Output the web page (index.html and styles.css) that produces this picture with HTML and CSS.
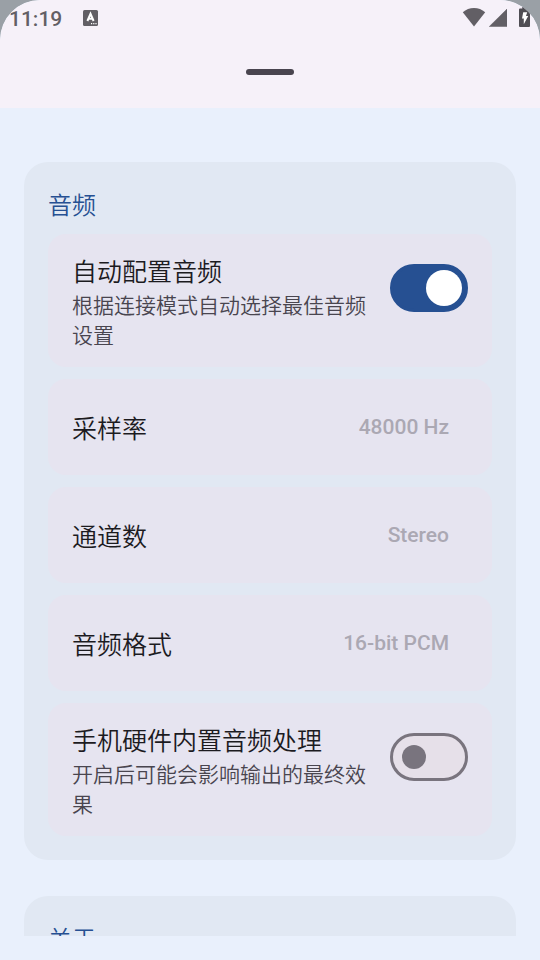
FILE: index.html
```html
<!DOCTYPE html>
<html lang="zh-CN">
  <head>
    <meta charset="UTF-8" />
    <meta name="viewport" content="width=device-width, initial-scale=1.0" />
    <title>音频</title>
    <link rel="stylesheet" href="styles.css">
  </head>
  <body>
    <header class="sheet-top">
      <div class="status-bar">
        <span class="time">11:19</span>
        <svg class="ime" width="16" height="18" viewBox="0 0 16 18">
          <rect x="0" y="1" width="15" height="16" rx="1.5" fill="#625f65" />
          <path d="M4.400 12L7.500 4.800L10.600 12M5.600 9.800H9.400" fill="none" stroke="#fff" stroke-width="2" />
          <path d="M8 14h1.200v1.200H8zM10.200 14h1.200v1.200h-1.200zM12.400 14h1.200v1.200h-1.200z" fill="#fff" />
        </svg>
        <div class="status-icons">
          <svg width="24" height="20" viewBox="0 0 24 20">
            <path d="M12 19.500L0.800 5.200C4 2.500 7.800 1 12 1s8 1.500 11.200 4.200z" fill="#625f65" />
          </svg>
          <svg width="18" height="20" viewBox="0 0 18 20">
            <path d="M18 2v17.500H0.300z" fill="#625f65" stroke="#625f65" stroke-width="0.500" stroke-linejoin="round" />
          </svg>
          <svg class="battery" width="12" height="20" viewBox="0 0 12 20">
            <path d="M3.300 0h4.600v1.600H10a1 1 0 0 1 1 1V19a1 1 0 0 1-1 1H1a1 1 0 0 1-1-1V2.600a1 1 0 0 1 1-1h2.300z" fill="#4f4d53" />
            <path d="M4.200 5.200h4L7 9h2.200L4.800 17.200V11.500H3z" fill="#fff" />
          </svg>
        </div>
      </div>
      <div class="handle"></div>
    </header>

    <main class="content">
      <section class="card">
        <h2>音频</h2>

        <label class="item switch-item">
          <span class="item-text">
            <span class="item-title">自动配置音频</span>
            <span class="item-desc">根据连接模式自动选择最佳音频设置</span>
          </span>
          <input type="checkbox" class="switch" checked />
        </label>

        <div class="item">
          <span class="item-title">采样率</span>
          <button type="button" class="value" disabled>48000 Hz</button>
        </div>

        <div class="item">
          <span class="item-title">通道数</span>
          <button type="button" class="value" disabled>Stereo</button>
        </div>

        <div class="item">
          <span class="item-title">音频格式</span>
          <button type="button" class="value" disabled>16-bit PCM</button>
        </div>

        <label class="item switch-item">
          <span class="item-text">
            <span class="item-title">手机硬件内置音频处理</span>
            <span class="item-desc">开启后可能会影响输出的最终效果</span>
          </span>
          <input type="checkbox" class="switch" />
        </label>
      </section>

      <section class="card">
        <h2>关于</h2>
      </section>
    </main>
  </body>
</html>
```
FILE: styles.css
```css
* {
  box-sizing: border-box;
}

html {
  background: #9aa0a6;
}

body {
  margin: 0;
  height: 100vh;
  display: flex;
  flex-direction: column;
  padding-bottom: 24px;
  background: #e9f0fc;
  border-radius: 40px 40px 0 0;
  font-family: "Noto Sans CJK SC", Roboto, sans-serif;
  font-weight: 350;
  color: #1c1b1f;
}

/* Top of the sheet */
.sheet-top {
  flex: none;
  height: 108px;
  background: #f6f1f9;
  border-radius: 40px 40px 0 0;
}

.status-bar {
  display: flex;
  align-items: center;
  height: 36px;
  padding: 0 9px;
}

.time {
  padding-top: 2px;
  font: 500 21px/30px Roboto, sans-serif;
  color: #625f65;
}

.ime {
  margin-left: 21px;
}

.status-icons {
  display: flex;
  gap: 3px;
  margin-left: auto;
  padding-bottom: 2px;
}

.battery {
  margin-left: 9px;
}

.handle {
  width: 48px;
  height: 6px;
  margin: 33px auto 0;
  border-radius: 3px;
  background: #49454f;
}

/* Settings list */
.content {
  flex: 1;
  min-height: 0;
  overflow-y: auto;
  scrollbar-width: none;
  padding: 54px 24px 0;
}

.card {
  display: flex;
  flex-direction: column;
  gap: 12px;
  margin-bottom: 36px;
  padding: 24px;
  border-radius: 24px;
  background: #e1e8f3;
}

.card h2 {
  margin: 0;
  font-size: 24px;
  font-weight: 350;
  line-height: 36px;
  color: #265092;
}

.item {
  display: flex;
  align-items: center;
  justify-content: space-between;
  gap: 24px;
  min-height: 96px;
  padding: 18px 24px;
  border-radius: 18px;
  background: #e6e4f0;
}

.switch-item {
  align-items: flex-start;
}

.item-text {
  flex: 1;
}

.item-title,
.item-desc {
  display: block;
}

.item-title {
  font-size: 25px;
  line-height: 37px;
}

.item-desc {
  font-size: 21px;
  line-height: 30px;
  color: #49454f;
}

.value {
  padding: 0 19px;
  border: 0;
  background: none;
  font: 500 21px/30px Roboto, sans-serif;
  color: #aba8b3;
}

/* Switch */
.switch {
  appearance: none;
  flex: none;
  display: flex;
  align-items: center;
  width: 78px;
  height: 48px;
  margin: 12px 0 0;
  padding: 0 9px;
  border: 3px solid #79747e;
  border-radius: 24px;
  background: #e6e0e9;
}

.switch::before {
  content: "";
  width: 24px;
  height: 24px;
  border-radius: 50%;
  background: #79747e;
}

.switch:checked {
  justify-content: flex-end;
  padding: 0 3px;
  border-color: #265092;
  background: #265092;
}

.switch:checked::before {
  width: 36px;
  height: 36px;
  background: #fff;
}
```
